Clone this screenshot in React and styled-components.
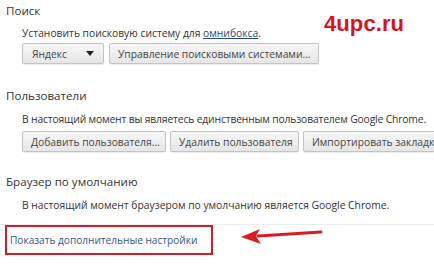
import React from "react";
import styled, { createGlobalStyle } from "styled-components";

const Global = createGlobalStyle`
  html, body { margin: 0; padding: 0; background: #fff; }
  body { font-family: "Open Sans", "Noto Sans", sans-serif; color: #303030; }
`;

const Page = styled.div`
  position: relative;
  width: 434px;
  height: 266px;
  overflow: hidden;
  background: #fff;
`;

const Section = styled.section`
  padding: ${(p) => p.$pad || "0 0 0 6px"};
`;

const Heading = styled.h3`
  margin: 0;
  font-weight: 400;
  font-size: 11.6px;
  line-height: 16px;
  color: #333;
`;

const Body = styled.div`
  padding-left: 16px;
  display: flex;
  flex-direction: column;
  gap: ${(p) => p.$gap ?? 5}px;
  margin-top: ${(p) => p.$mt ?? 8}px;
`;

const Text = styled.p`
  margin: 0;
  font-size: 10.3px;
  line-height: 14px;
  letter-spacing: ${(p) => (p.$tight ? "-0.14px" : "0")};
  color: #333;
  white-space: nowrap;
`;

const Link = styled.a`
  color: #2b4a78;
  text-decoration: underline;
`;

const Row = styled.div`
  display: flex;
  gap: ${(p) => p.$gap ?? 5}px;
`;

const Button = styled.div`
  flex: none;
  box-sizing: border-box;
  height: 21px;
  width: ${(p) => p.$w}px;
  padding: 0 ${(p) => p.$px ?? 8}px;
  display: flex;
  align-items: center;
  justify-content: ${(p) => (p.$split ? "space-between" : "flex-start")};
  border: 1px solid #c4c4c4;
  border-radius: 2px;
  background: linear-gradient(#f6f6f6, #e6e6e6);
  box-shadow: 0 1px 1px rgba(0,0,0,0.08);
  font-size: 10.3px;
  color: #444;
  white-space: nowrap;
`;

const Caret = styled.span`
  width: 0;
  height: 0;
  border-left: 4px solid transparent;
  border-right: 4px solid transparent;
  border-top: 5px solid #222;
`;

const Logo = styled.div`
  position: absolute;
  left: 324px;
  top: 11px;
  font-family: "Liberation Sans", Arial, sans-serif;
  font-weight: 700;
  font-size: 22px;
  letter-spacing: 0.1px;
  color: #d7141e;
`;

const Footer = styled.div`
  margin-top: 12px;
  border-top: 1px solid #ececec;
  padding: 0 0 0 5px;
`;

const HighlightBox = styled.div`
  box-sizing: border-box;
  width: 208px;
  height: 30px;
  border: 2px solid #c8232c;
  display: flex;
  align-items: center;
  padding-left: 3px;
`;

const MoreLink = styled.a`
  font-size: 10.1px;
  color: #34558b;
  text-decoration: none;
  white-space: nowrap;
`;

const Arrow = styled.svg`
  position: absolute;
  left: 238px;
  top: 226px;
`;

export default function App() {
  return (
    <Page>
      <Global />
      <Section $pad="3px 0 0 6px">
        <Heading>Поиск</Heading>
        <Body $mt={7} $gap={3}>
          <Text>
            Установить поисковую систему для <Link>омнибокса</Link>.
          </Text>
          <Row $gap={5}>
            <Button $w={82} $px={9} $split>
              Яндекс <Caret />
            </Button>
            <Button $w={210}>Управление поисковыми системами...</Button>
          </Row>
        </Body>
      </Section>
      <Section $pad="24px 0 0 6px">
        <Heading>Пользователи</Heading>
        <Body $mt={8}>
          <Text $tight>
            В настоящий момент вы являетесь единственным пользователем Google Chrome.
          </Text>
          <Row $gap={4}>
            <Button $w={144}>Добавить пользователя...</Button>
            <Button $w={129}>Удалить пользователя</Button>
            <Button $w={200}>Импортировать закладки и настройки</Button>
          </Row>
        </Body>
      </Section>
      <Section $pad="22px 0 0 6px">
        <Heading>Браузер по умолчанию</Heading>
        <Body $mt={8}>
          <Text>
            В настоящий момент браузером по умолчанию является Google Chrome.
          </Text>
        </Body>
      </Section>
      <Footer>
        <HighlightBox>
          <MoreLink>Показать дополнительные настройки</MoreLink>
        </HighlightBox>
      </Footer>
      <Logo>4upc.ru</Logo>
      <Arrow width="90" height="24" viewBox="0 0 90 24">
        <path d="M83 6 L20 10" stroke="#d81c22" strokeWidth="3" strokeLinecap="round" fill="none" />
        <path d="M3 11 L22 3 L18 10 L23 18 Z" fill="#d81c22" />
      </Arrow>
    </Page>
  );
}
